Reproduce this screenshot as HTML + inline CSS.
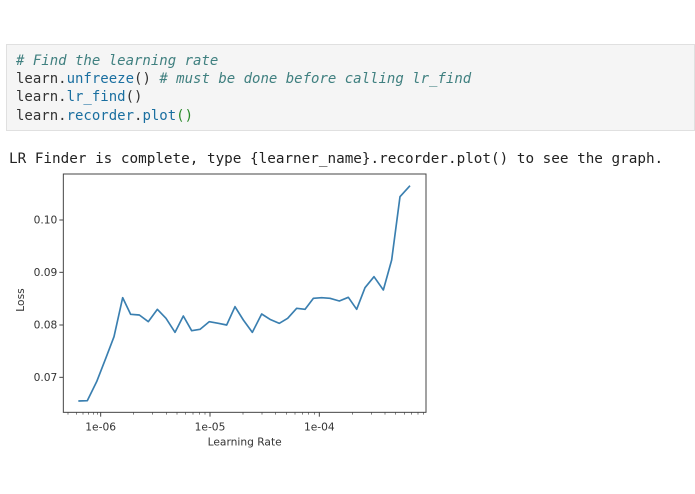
<!DOCTYPE html>
<html><head><style>
body{margin:0;width:695px;height:494px;background:#fff;position:relative;overflow:hidden;font-family:"DejaVu Sans Mono","Liberation Mono",monospace;}
.code{position:absolute;left:6px;top:44px;width:689px;height:87px;background:#f5f5f5;border:1px solid #e0e0e0;box-sizing:border-box;}
.ln{position:absolute;left:9px;font-size:14px;line-height:16px;color:#333;white-space:pre;}
.c{color:#408080;font-style:italic}
.b{color:#1a6fa0}
.g{color:#2a8a2a}
.out{position:absolute;left:9px;top:151px;font-size:14.3px;line-height:16px;color:#222;white-space:pre;}
</style></head><body>
<div class="code">
<div class="ln" style="top:8px"><span class="c"># Find the learning rate</span></div>
<div class="ln" style="top:26px">learn.<span class="b">unfreeze</span>() <span class="c"># must be done before calling lr_find</span></div>
<div class="ln" style="top:44px">learn.<span class="b">lr_find</span>()</div>
<div class="ln" style="top:63px">learn.<span class="b">recorder</span>.<span class="b">plot</span><span class="g">()</span></div>
</div>
<div class="out">LR Finder is complete, type {learner_name}.recorder.plot() to see the graph.</div>
<svg style="position:absolute;left:0;top:170px" width="440" height="280" viewBox="0 0 1320 840">
<rect x="190" y="12" width="1088" height="715" fill="none" stroke="#444" stroke-width="3"/>
<g stroke="#444" stroke-width="3">
<line x1="178" y1="150" x2="190" y2="150"/><line x1="178" y1="307" x2="190" y2="307"/><line x1="178" y1="465" x2="190" y2="465"/><line x1="178" y1="622" x2="190" y2="622"/>
<line x1="302" y1="727" x2="302" y2="740"/><line x1="630" y1="727" x2="630" y2="740"/><line x1="958" y1="727" x2="958" y2="740"/>
</g>
<g stroke="#444" stroke-width="2">
<line x1="204" y1="727" x2="204" y2="734"/><line x1="229" y1="727" x2="229" y2="734"/><line x1="249" y1="727" x2="249" y2="734"/><line x1="266" y1="727" x2="266" y2="734"/><line x1="281" y1="727" x2="281" y2="734"/><line x1="293" y1="727" x2="293" y2="734"/>
<line x1="401" y1="727" x2="401" y2="734"/><line x1="458" y1="727" x2="458" y2="734"/><line x1="499" y1="727" x2="499" y2="734"/><line x1="531" y1="727" x2="531" y2="734"/><line x1="557" y1="727" x2="557" y2="734"/><line x1="579" y1="727" x2="579" y2="734"/><line x1="598" y1="727" x2="598" y2="734"/><line x1="615" y1="727" x2="615" y2="734"/>
<line x1="729" y1="727" x2="729" y2="734"/><line x1="786" y1="727" x2="786" y2="734"/><line x1="827" y1="727" x2="827" y2="734"/><line x1="859" y1="727" x2="859" y2="734"/><line x1="885" y1="727" x2="885" y2="734"/><line x1="907" y1="727" x2="907" y2="734"/><line x1="926" y1="727" x2="926" y2="734"/><line x1="943" y1="727" x2="943" y2="734"/>
<line x1="1057" y1="727" x2="1057" y2="734"/><line x1="1114" y1="727" x2="1114" y2="734"/><line x1="1155" y1="727" x2="1155" y2="734"/><line x1="1187" y1="727" x2="1187" y2="734"/><line x1="1213" y1="727" x2="1213" y2="734"/><line x1="1235" y1="727" x2="1235" y2="734"/><line x1="1254" y1="727" x2="1254" y2="734"/><line x1="1271" y1="727" x2="1271" y2="734"/>
</g>
<g font-family="DejaVu Sans, sans-serif" font-size="32" fill="#333">
<text x="172" y="161" text-anchor="end">0.10</text>
<text x="172" y="318" text-anchor="end">0.09</text>
<text x="172" y="476" text-anchor="end">0.08</text>
<text x="172" y="633" text-anchor="end">0.07</text>
<text x="302" y="782" text-anchor="middle">1e-06</text>
<text x="630" y="782" text-anchor="middle">1e-05</text>
<text x="958" y="782" text-anchor="middle">1e-04</text>
<text x="734" y="827" text-anchor="middle">Learning Rate</text>
<text transform="translate(72,390) rotate(-90)" text-anchor="middle">Loss</text>
</g>
<polyline fill="none" stroke="#3a7fb0" stroke-width="5" stroke-linejoin="round" points="235,693 262,692 290,635 318,563 342,500 368,383 392,433 418,435 445,455 472,418 498,445 525,487 550,438 575,482 600,478 628,455 655,460 680,465 705,410 730,450 757,487 785,432 810,448 838,460 863,445 890,415 915,418 940,385 965,383 990,385 1018,393 1045,382 1070,418 1095,353 1122,320 1150,360 1175,270 1200,80 1230,47"/>
</svg>
</body></html>
